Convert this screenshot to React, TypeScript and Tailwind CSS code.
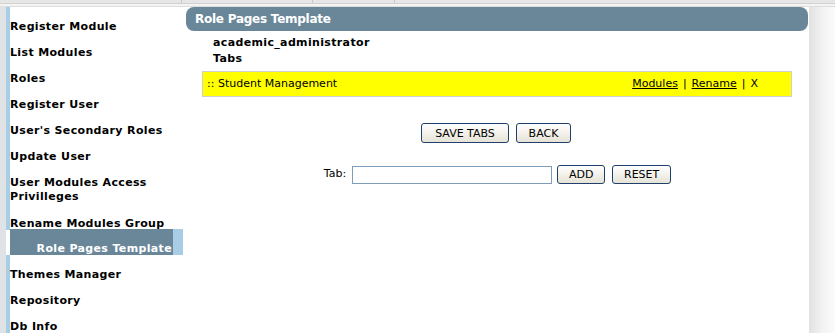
const menu = [
    { label: "Register Module" },
    { label: "List Modules" },
    { label: "Roles" },
    { label: "Register User" },
    { label: "User's Secondary Roles" },
    { label: "Update User" },
    { label: "User Modules Access Privilleges", wrap: true },
    { label: "Rename Modules Group" },
    { label: "Role Pages Template", active: true },
    { label: "Themes Manager" },
    { label: "Repository" },
    { label: "Db Info" },
];

const btn =
    "h-[19px] rounded-[3px] border border-[#1f3f6e] bg-gradient-to-b from-white to-[#e6e3d6] text-[11px] leading-none text-black text-center";

export default function App() {
    return (
        <div className="w-[835px] h-[333px] overflow-hidden bg-[#e2e2e2] font-['DejaVu_Sans',Verdana,sans-serif]">
            {/* top strip */}
            <div className="h-[7px] flex flex-col">
                <div className="h-[3px] flex bg-[#e6e6e6]">
                    <div className="w-[182px] border-r border-[#c8c8c8]"></div>
                    <div className="w-[131px] border-r border-[#c8c8c8]"></div>
                    <div className="w-[82px] border-r border-[#c8c8c8]"></div>
                </div>
                <div className="h-[1px] bg-[#d2d2d2]"></div>
                <div className="h-[2px] bg-[#f4f4f2]"></div>
                <div className="h-[1px] bg-[#dcdcdc]"></div>
            </div>

            <div className="flex h-[326px]">
                <div className="w-[6px] bg-[#e0e3e5]"></div>

                <div className="w-[803px] bg-white flex">
                    {/* sidebar */}
                    <div className="w-[180px] flex flex-col">
                        <div className="h-[1px] border-l-4 border-[#a8cee6]"></div>
                        {menu.map((m, i) =>
                            m.active ? (
                                <div key={i} className="flex h-[26px] pl-[4px] mr-[3px] -mt-[1px]">
                                    <div className="flex-1 bg-[#6a8799] text-white text-[11px] font-bold tracking-[0.35px] leading-[14px] pt-[13px] text-right pr-[1px]">
                                        {m.label}
                                    </div>
                                    <div className="w-[10px] bg-[#a8cee6]"></div>
                                </div>
                            ) : (
                                <div
                                    key={i}
                                    className={
                                        "border-l-4 border-[#a8cee6] pt-[13px] text-[11px] font-bold tracking-[0.35px] text-black pr-[10px] " +
                                        (m.wrap ? "leading-[14px]" : "leading-[13px]")
                                    }
                                >
                                    {m.label}
                                </div>
                            )
                        )}
                        <div className="flex-1 border-l-4 border-[#a8cee6]"></div>
                    </div>

                    {/* main */}
                    <div className="flex-1 flex flex-col pr-[1px]">
                        <div className="h-[24px] rounded-[8px] bg-[#6a8799] text-white text-[12px] font-bold tracking-[-0.25px] leading-[24px] pl-[9px]">
                            Role Pages Template
                        </div>

                        <div className="pl-[27px] pt-[4px] text-[11px] font-bold tracking-[0.35px] leading-[16px] text-black">
                            <div>academic_administrator</div>
                            <div>Tabs</div>
                        </div>

                        <div className="mt-[4px] ml-[16px] w-[590px] h-[26px] border border-[#cfcfcf] bg-[#ffff00] flex items-center justify-between text-[11px] text-black pl-[4px] pr-[33px]">
                            <span>:: Student Management</span>
                            <span className="flex gap-[5px]">
                                <a className="underline">Modules</a>
                                <span>|</span>
                                <a className="underline">Rename</a>
                                <span>|</span>
                                <a>X</a>
                            </span>
                        </div>

                        <div className="mt-[26px] flex justify-center gap-[7px] pr-[2px]">
                            <button className={btn + " w-[88px] h-[20px]"}>SAVE TABS</button>
                            <button className={btn + " w-[55px] h-[20px]"}>BACK</button>
                        </div>

                        <div className="mt-[22px] flex items-center justify-center pl-[1px] text-[11px] text-black">
                            <span className="mr-[6px]">Tab:</span>
                            <input className="w-[200px] h-[18px] border border-[#7f9db9] bg-white outline-none" />
                            <button className={btn + " w-[48px] ml-[5px]"}>ADD</button>
                            <button className={btn + " w-[59px] ml-[7px]"}>RESET</button>
                        </div>
                    </div>
                </div>

                <div className="w-[26px] bg-gradient-to-r from-[#e2e2e2] via-[#f2f2f2] to-[#fbfbfb]"></div>
            </div>
        </div>
    );
}
